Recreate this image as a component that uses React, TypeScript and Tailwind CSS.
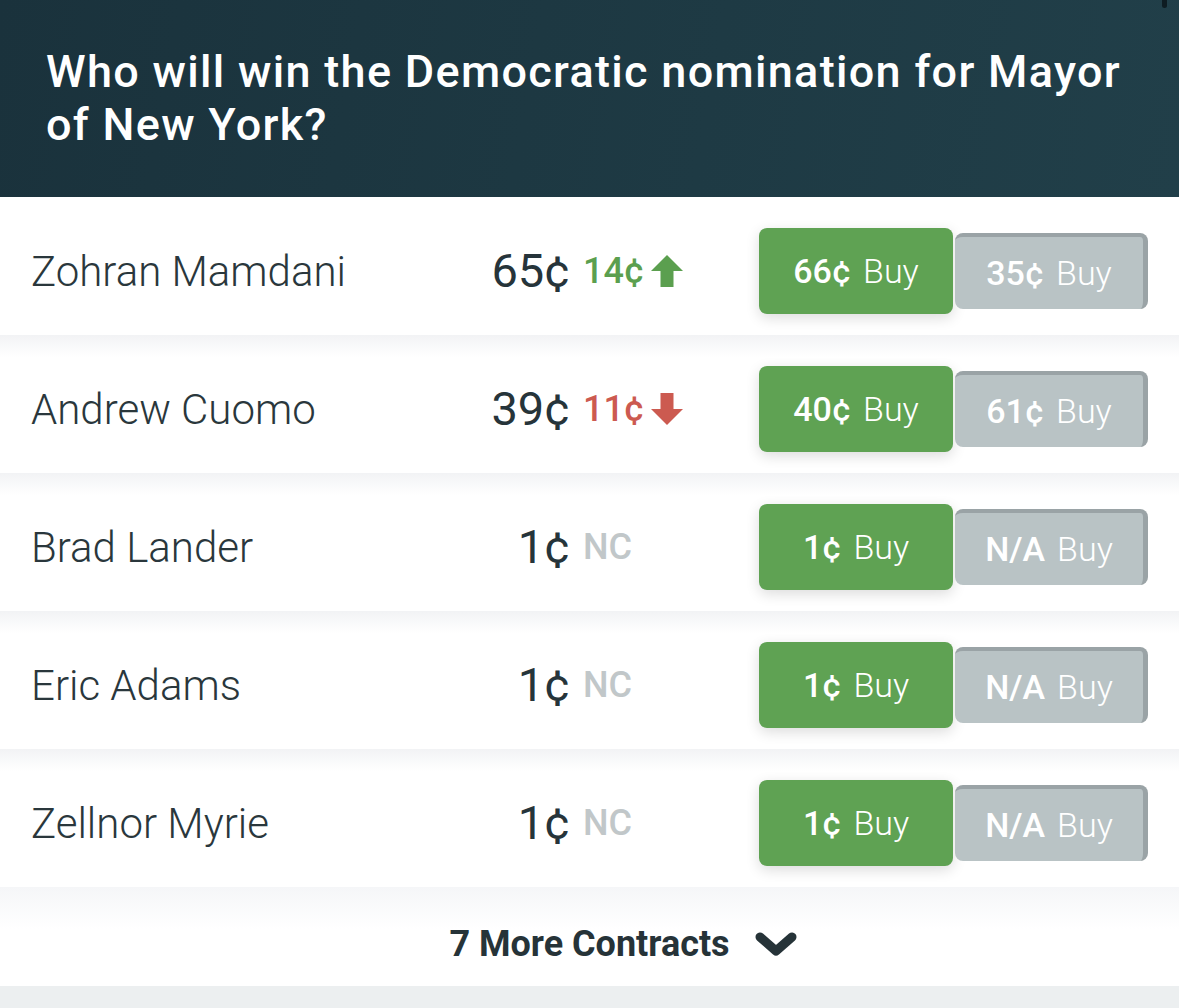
type Contract = {
  name: string;
  price: string;
  change: string;
  dir: 'up' | 'down' | 'none';
  yes: string;
  no: string;
};

const contracts: Contract[] = [
  { name: 'Zohran Mamdani', price: '65¢', change: '14¢', dir: 'up', yes: '66¢', no: '35¢' },
  { name: 'Andrew Cuomo', price: '39¢', change: '11¢', dir: 'down', yes: '40¢', no: '61¢' },
  { name: 'Brad Lander', price: '1¢', change: 'NC', dir: 'none', yes: '1¢', no: 'N/A' },
  { name: 'Eric Adams', price: '1¢', change: 'NC', dir: 'none', yes: '1¢', no: 'N/A' },
  { name: 'Zellnor Myrie', price: '1¢', change: 'NC', dir: 'none', yes: '1¢', no: 'N/A' },
];

function Arrow({ up, className }: { up: boolean; className: string }) {
  return (
    <svg viewBox="0 0 32 32" className={className} fill="currentColor">
      {up ? (
        <path d="M16 0 L32 16 H22.5 V32 H9.5 V16 H0 Z" />
      ) : (
        <path d="M16 32 L32 16 H22.5 V0 H9.5 V16 H0 Z" />
      )}
    </svg>
  );
}

function Row({ c, first }: { c: Contract; first: boolean }) {
  const tone = c.dir === 'up' ? 'text-[#5b9f4f]' : 'text-[#cc5a50]';
  return (
    <div
      className={`flex h-[138px] items-center pt-[10px] ${
        first ? 'bg-white' : 'bg-[linear-gradient(to_bottom,#f2f3f5,#ffffff_22px)]'
      }`}
    >
      <div className="w-[400px] pl-[31px] text-[42px] font-light text-[#2a373c]">{c.name}</div>
      <div className="w-[170px] text-right text-[47px] font-normal text-[#26343a]">{c.price}</div>
      <div className="flex w-[189px] items-center pl-[13px]">
        {c.dir === 'none' ? (
          <span className="text-[36px] font-medium text-[#c1c7c9]">NC</span>
        ) : (
          <>
            <span className={`text-[36px] font-medium ${tone}`}>{c.change}</span>
            <Arrow up={c.dir === 'up'} className={`ml-[7px] h-[32px] w-[32px] ${tone}`} />
          </>
        )}
      </div>
      <div className="flex items-center">
        <button
          type="button"
          className="flex h-[86px] w-[194px] items-center justify-center gap-[12px] rounded-[8px] bg-[#5fa253] text-[34px] text-white shadow-[0_4px_14px_rgba(0,0,0,0.14)]"
        >
          <span className="font-medium">{c.yes}</span>
          <span className="font-light">Buy</span>
        </button>
        <button
          type="button"
          className="ml-[2px] flex h-[76px] w-[193px] items-center justify-center gap-[12px] rounded-[8px] border-t-[4px] border-r-[5px] border-[#9aa3a6] bg-[#b9c3c5] text-[34px] text-white"
        >
          <span className="font-medium">{c.no}</span>
          <span className="font-light">Buy</span>
        </button>
      </div>
    </div>
  );
}

export default function App() {
  return (
    <div className="h-[1008px] w-[1179px] overflow-hidden bg-[#eceff0] font-['Roboto',sans-serif]">
      <div className="relative h-[197px] bg-[linear-gradient(100deg,#1a323c,#1e3a44_60%,#213f49)] pl-[46px] pt-[45px]">
        <h1 className="text-[45px] leading-[53px] font-medium tracking-[1.3px] text-white">
          Who will win the Democratic nomination for Mayor
          <br />
          of New York?
        </h1>
        <div className="absolute top-[-4px] right-[12px] h-[12px] w-[5px] rounded-full bg-[#0e1c22]" />
      </div>

      {contracts.map((c, i) => (
        <Row key={c.name} c={c} first={i === 0} />
      ))}

      <div className="flex h-[99px] items-center justify-center bg-[linear-gradient(to_bottom,#f5f6f8,#ffffff_42px)] pt-[14px]">
        <span className="relative text-[36px] font-bold text-[#263338]">
          7 More Contracts
          <svg
            viewBox="0 0 42 24"
            className="absolute top-1/2 left-full ml-[25px] h-[24px] w-[42px] -translate-y-1/2"
            fill="none"
            stroke="currentColor"
            strokeWidth={9}
            strokeLinecap="round"
            strokeLinejoin="round"
          >
            <polyline points="5,5 21,19 37,5" />
          </svg>
        </span>
      </div>
    </div>
  );
}
